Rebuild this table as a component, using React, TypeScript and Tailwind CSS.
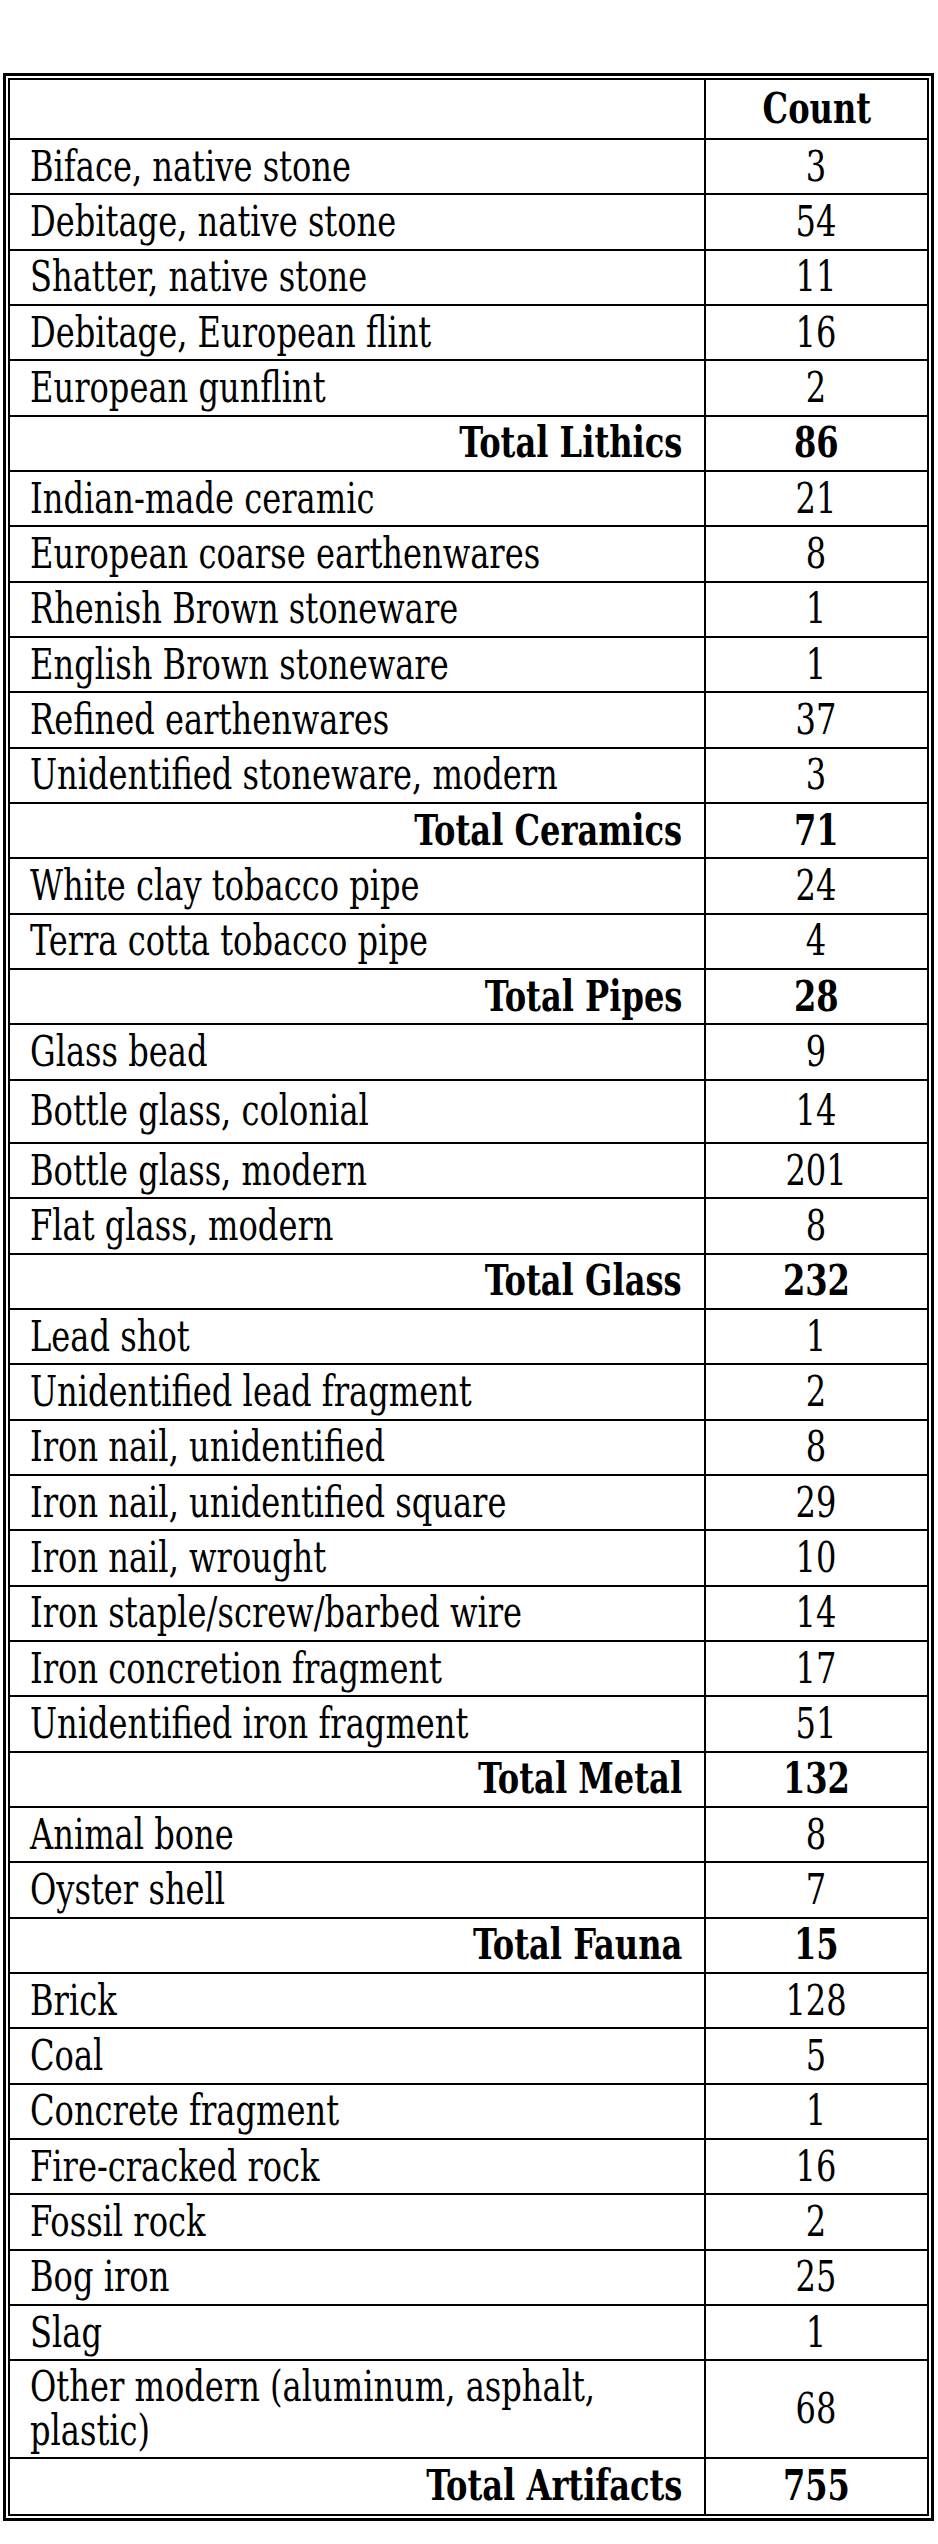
import React from "react"

type Row = {
	label: string
	count: string
	total?: boolean
	h?: string
}

const rows: Row[] = [
	{ label: "Biface, native stone", count: "3" },
	{ label: "Debitage, native stone", count: "54" },
	{ label: "Shatter, native stone", count: "11" },
	{ label: "Debitage, European flint", count: "16" },
	{ label: "European gunflint", count: "2" },
	{ label: "Total Lithics", count: "86", total: true },
	{ label: "Indian-made ceramic", count: "21" },
	{ label: "European coarse earthenwares", count: "8" },
	{ label: "Rhenish Brown stoneware", count: "1" },
	{ label: "English Brown stoneware", count: "1" },
	{ label: "Refined earthenwares", count: "37" },
	{ label: "Unidentified stoneware, modern", count: "3" },
	{ label: "Total Ceramics", count: "71", total: true },
	{ label: "White clay tobacco pipe", count: "24" },
	{ label: "Terra cotta tobacco pipe", count: "4" },
	{ label: "Total Pipes", count: "28", total: true },
	{ label: "Glass bead", count: "9" },
	{ label: "Bottle glass, colonial", count: "14", h: "h-[63.5px]" },
	{ label: "Bottle glass, modern", count: "201" },
	{ label: "Flat glass, modern", count: "8" },
	{ label: "Total Glass", count: "232", total: true },
	{ label: "Lead shot", count: "1" },
	{ label: "Unidentified lead fragment", count: "2" },
	{ label: "Iron nail, unidentified", count: "8" },
	{ label: "Iron nail, unidentified square", count: "29" },
	{ label: "Iron nail, wrought", count: "10" },
	{ label: "Iron staple/screw/barbed wire", count: "14" },
	{ label: "Iron concretion fragment", count: "17" },
	{ label: "Unidentified iron fragment", count: "51" },
	{ label: "Total Metal", count: "132", total: true },
	{ label: "Animal bone", count: "8" },
	{ label: "Oyster shell", count: "7" },
	{ label: "Total Fauna", count: "15", total: true },
	{ label: "Brick", count: "128" },
	{ label: "Coal", count: "5" },
	{ label: "Concrete fragment", count: "1" },
	{ label: "Fire-cracked rock", count: "16" },
	{ label: "Fossil rock", count: "2" },
	{ label: "Bog iron", count: "25" },
	{ label: "Slag", count: "1" },
]

const TableRow = ({ row }: { row: Row }) => (
	<div className={`flex border-b-2 border-black ${row.h ?? "h-[55.33px]"}`}>
		<div
			className={`flex w-[696px] shrink-0 items-center border-r-2 border-black pl-[20px] pr-[22px] ${
				row.total ? "justify-end" : "justify-start"
			}`}
		>
			<span
				className={`inline-block whitespace-nowrap scale-x-[0.85] ${
					row.total ? "origin-right font-bold" : "origin-left"
				}`}
			>
				{row.label}
			</span>
		</div>
		<div className="flex flex-1 items-center justify-center">
			<span className={`inline-block origin-center scale-x-[0.85] ${row.total ? "font-bold" : ""}`}>
				{row.count}
			</span>
		</div>
	</div>
)

export default function App() {
	return (
		<div className="min-h-[2544px] w-[938px] bg-white pl-[3px] pt-[73px] font-['DejaVu_Serif_Condensed','DejaVu_Serif',serif] text-[42px] leading-[48px] text-black font-stretch-condensed">
			<div className="w-[931px] border-[3px] border-black p-[2px]">
				<div className="border-2 border-black">
					<div className="flex h-[60px] border-b-2 border-black">
						<div className="w-[696px] shrink-0 border-r-2 border-black" />
						<div className="flex flex-1 items-center justify-center">
							<span className="inline-block origin-center scale-x-[0.85] font-bold">Count</span>
						</div>
					</div>

					{rows.map((row) => (
						<TableRow key={row.label} row={row} />
					))}

					<div className="flex h-[97.4px] border-b-2 border-black">
						<div className="flex w-[696px] shrink-0 items-center border-r-2 border-black pl-[20px] pr-[22px]">
							<span className="inline-block origin-left scale-x-[0.85] whitespace-nowrap leading-[44px]">
								Other modern (aluminum, asphalt,
								<br />
								plastic)
							</span>
						</div>
						<div className="flex flex-1 items-center justify-center">
							<span className="inline-block origin-center scale-x-[0.85]">68</span>
						</div>
					</div>

					<div className="flex h-[55.6px]">
						<div className="flex w-[696px] shrink-0 items-center justify-end border-r-2 border-black pl-[20px] pr-[22px]">
							<span className="inline-block origin-right scale-x-[0.85] whitespace-nowrap font-bold">
								Total Artifacts
							</span>
						</div>
						<div className="flex flex-1 items-center justify-center">
							<span className="inline-block origin-center scale-x-[0.85] font-bold">755</span>
						</div>
					</div>
				</div>
			</div>
		</div>
	)
}
